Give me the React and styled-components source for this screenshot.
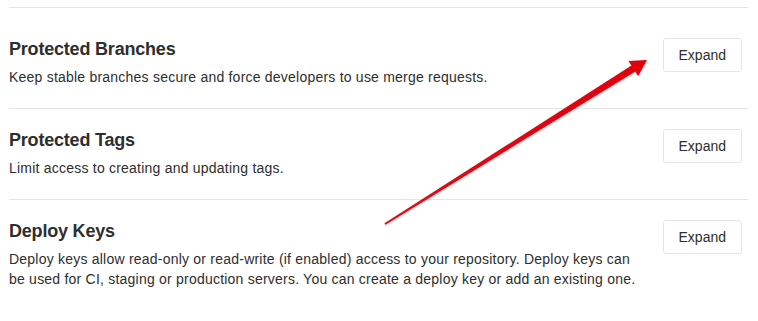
import React from 'react'
import styled, { createGlobalStyle } from 'styled-components'

const GlobalStyle = createGlobalStyle`
  body {
    margin: 0;
    background: #fff;
    font-family: "Liberation Sans", Arial, sans-serif;
    color: #2e2e2e;
  }
`

const Page = styled.div`
  position: relative;
  padding: 7px 10px 0 9px;
`

const Section = styled.section`
  display: flex;
  align-items: flex-start;
  justify-content: space-between;
  border-top: 1px solid #e5e5e5;
  padding: ${props => (props.first ? '30px' : '20px')} 6px 21px 0;

  &:last-child {
    border-bottom: 1px solid #e5e5e5;
  }
`

const Header = styled.div`
  max-width: 640px;
`

const Title = styled.h4`
  margin: 0 0 7px;
  font-size: 18px;
  line-height: 22px;
  font-weight: bold;
  letter-spacing: -0.2px;
`

const Description = styled.p`
  margin: 0;
  font-size: 14px;
  line-height: 20px;
  letter-spacing: 0.22px;
`

const ExpandButton = styled.button`
  flex: none;
  font-family: inherit;
  font-size: 14px;
  line-height: 20px;
  color: #2e2e2e;
  background: #fff;
  border: 1px solid #e5e5e5;
  border-radius: 3px;
  padding: 6px 15px;
  cursor: pointer;
`

const Arrow = styled.svg`
  position: absolute;
  left: 0;
  top: 0;
  pointer-events: none;
  filter: drop-shadow(0 1px 1px rgba(0, 0, 0, 0.25));
`

const sections = [
  {
    title: 'Protected Branches',
    text: 'Keep stable branches secure and force developers to use merge requests.'
  },
  {
    title: 'Protected Tags',
    text: 'Limit access to creating and updating tags.'
  },
  {
    title: 'Deploy Keys',
    text: 'Deploy keys allow read-only or read-write (if enabled) access to your repository. Deploy keys can be used for CI, staging or production servers. You can create a deploy key or add an existing one.'
  }
]

const App = () => {
  return (
    <Page>
      <GlobalStyle />
      {sections.map((s, i) => (
        <Section key={s.title} first={i === 0}>
          <Header>
            <Title>{s.title}</Title>
            <Description>{s.text}</Description>
          </Header>
          <ExpandButton type="button">Expand</ExpandButton>
        </Section>
      ))}
      <Arrow width="758" height="321" viewBox="0 0 758 321">
        <defs>
          <linearGradient id="arrowFill" x1="385" y1="224" x2="647" y2="60" gradientUnits="userSpaceOnUse">
            <stop offset="0" stopColor="#d8101a" />
            <stop offset="1" stopColor="#e0000c" />
          </linearGradient>
        </defs>
        <polygon
          fill="url(#arrowFill)"
          points="384.5,223.2 631.5,65.5 628.6,60.9 647,60 638.2,76.1 635.3,71.5 385.5,224.8"
        />
      </Arrow>
    </Page>
  )
}

export default App
